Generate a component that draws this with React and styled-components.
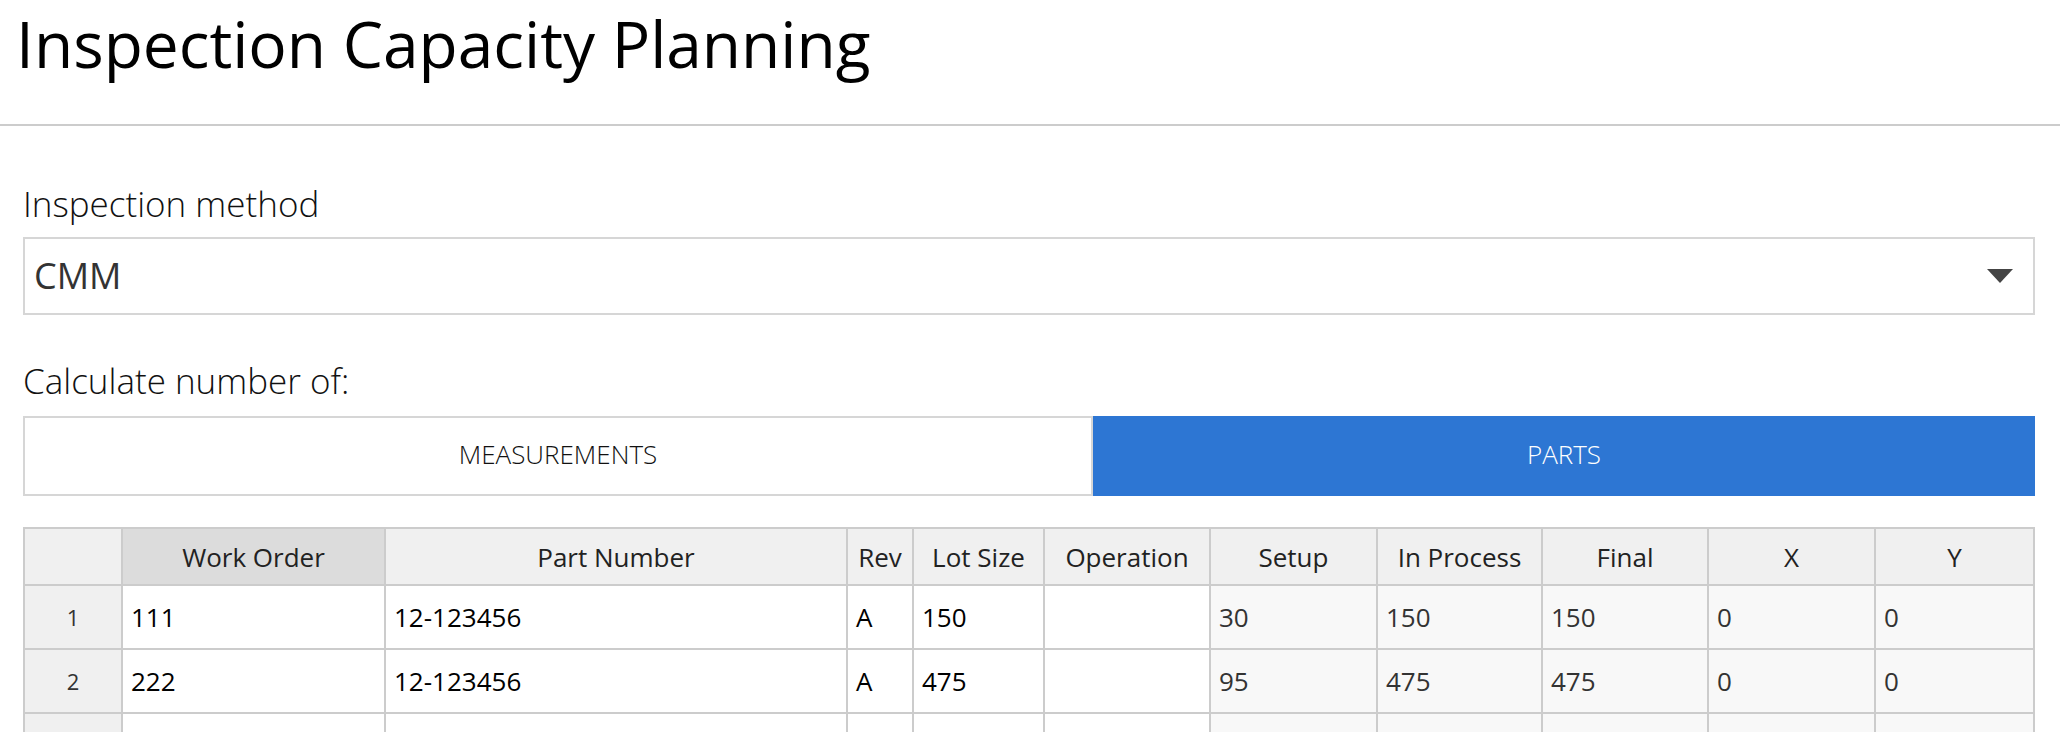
import React from 'react';
import styled, { createGlobalStyle } from 'styled-components';

const GlobalStyle = createGlobalStyle`
  *, *::before, *::after {
    box-sizing: border-box;
  }

  body {
    margin: 0;
    background: #fff;
    font-family: 'Open Sans', 'Noto Sans', sans-serif;
    color: #000;
  }
`;

const StyledHeader = styled.header`
  padding: 0 16px 37px;
  border-bottom: 2px solid #cccccc;
`;

const Title = styled.h1`
  margin: 0;
  font-size: 64px;
  font-weight: 400;
  line-height: 87px;
  color: #000;
`;

const StyledMain = styled.main`
  padding: 56px 25px 0 23px;
`;

const FieldLabel = styled.div`
  margin-top: ${({ $gap }) => $gap || 0}px;
  font-size: 35px;
  font-weight: 300;
  line-height: 44px;
  color: #111;
`;

const SelectBox = styled.div`
  display: flex;
  align-items: center;
  justify-content: space-between;
  height: 78px;
  margin-top: 11px;
  padding: 0 20px 0 9px;
  border: 2px solid #d6d6d6;
  font-size: 36px;
  line-height: 44px;
  color: #333;

  svg {
    display: block;
  }
`;

const Toggle = styled.div`
  display: grid;
  grid-template-columns: 1070px 1fr;
  margin-top: 13px;
`;

const ToggleButton = styled.button`
  height: 80px;
  margin: 0;
  padding: 0 0 4px;
  font-family: inherit;
  font-size: 26px;
  font-weight: 300;
  text-transform: uppercase;
  cursor: pointer;
  background: ${({ $active }) => ($active ? '#2d76d3' : '#fff')};
  color: ${({ $active }) => ($active ? '#fff' : '#111')};
  border: ${({ $active }) => ($active ? '0' : '2px solid #d6d6d6')};
`;

const Grid = styled.div`
  display: grid;
  grid-template-columns: 98px 263px 462px 66px 131px 166px 167px 165px 166px 167px 1fr;
  margin-top: 31px;
  border-top: 2px solid #cccccc;
  border-left: 2px solid #cccccc;
`;

const Cell = styled.div`
  display: flex;
  align-items: center;
  height: 64px;
  padding: 0 8px;
  border-right: 2px solid #cccccc;
  border-bottom: 2px solid #cccccc;
  font-size: 26px;
  line-height: 36px;
  white-space: nowrap;
  overflow: hidden;
  background: ${({ $readOnly }) => ($readOnly ? '#f8f8f8' : '#fff')};
  color: ${({ $readOnly }) => ($readOnly ? '#333' : '#000')};
`;

const HeadCell = styled(Cell)`
  justify-content: center;
  height: 57px;
  background: ${({ $selected }) => ($selected ? '#dcdcdc' : '#f0f0f0')};
  color: #222;
`;

const RowHead = styled(Cell)`
  justify-content: center;
  background: #f0f0f0;
  font-size: 22px;
  color: #333;
`;

const columns = [
  { title: 'Work Order', key: 'wo' },
  { title: 'Part Number', key: 'part' },
  { title: 'Rev', key: 'rev' },
  { title: 'Lot Size', key: 'lot' },
  { title: 'Operation', key: 'op' },
  { title: 'Setup', key: 'setup', readOnly: true },
  { title: 'In Process', key: 'inProcess', readOnly: true },
  { title: 'Final', key: 'final', readOnly: true },
  { title: 'X', key: 'x', readOnly: true },
  { title: 'Y', key: 'y', readOnly: true },
];

const rows = [
  { wo: '111', part: '12-123456', rev: 'A', lot: '150', op: '', setup: '30', inProcess: '150', final: '150', x: '0', y: '0' },
  { wo: '222', part: '12-123456', rev: 'A', lot: '475', op: '', setup: '95', inProcess: '475', final: '475', x: '0', y: '0' },
  {},
];

const Caret = () => (
  <svg width="26" height="14" viewBox="0 0 26 14">
    <polygon points="0,0 26,0 13,14" fill="#444" />
  </svg>
);

const App = () => (
  <>
    <GlobalStyle />
    <StyledHeader>
      <Title>Inspection Capacity Planning</Title>
    </StyledHeader>

    <StyledMain>
      <FieldLabel>Inspection method</FieldLabel>
      <SelectBox>
        <span>CMM</span>
        <Caret />
      </SelectBox>

      <FieldLabel $gap={44}>Calculate number of:</FieldLabel>
      <Toggle>
        <ToggleButton>Measurements</ToggleButton>
        <ToggleButton $active>Parts</ToggleButton>
      </Toggle>

      <Grid>
        <HeadCell />
        {columns.map((col, i) => (
          <HeadCell key={col.key} $selected={i === 0}>
            {col.title}
          </HeadCell>
        ))}
        {rows.map((row, r) => (
          <React.Fragment key={r}>
            <RowHead>{row.wo ? r + 1 : ''}</RowHead>
            {columns.map(col => (
              <Cell key={col.key} $readOnly={col.readOnly}>
                {row[col.key]}
              </Cell>
            ))}
          </React.Fragment>
        ))}
      </Grid>
    </StyledMain>
  </>
);

export default App;
